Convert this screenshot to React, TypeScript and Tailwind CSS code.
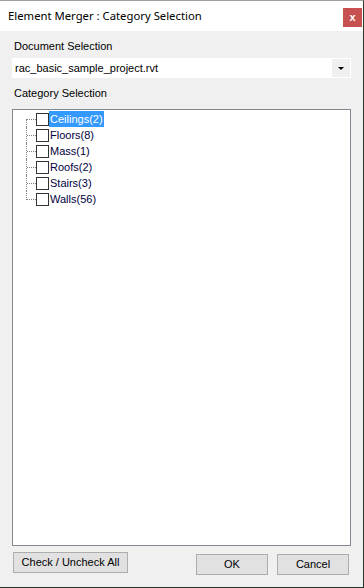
import React from "react";

const items = ["Ceilings(2)", "Floors(8)", "Mass(1)", "Roofs(2)", "Stairs(3)", "Walls(56)"];

export default function App() {
  return (
    <div
      className="w-[364px] h-[588px] flex flex-col bg-[#f0f0f0] border-t border-t-[#a0a0a0] border-r border-r-[#2c3628] border-b border-b-[#2c3628] overflow-hidden"
      style={{ fontFamily: '"Liberation Sans", Arial, sans-serif' }}
    >
      {/* Title bar */}
      <div className="h-[30px] bg-white flex items-start justify-between shrink-0">
        <div className="pl-[8px] pt-[7px] text-[11.3px] leading-[16px] text-black" style={{ fontFamily: '"Noto Sans", "Liberation Sans", sans-serif' }}>
          Element Merger : Category Selection
        </div>
        <div className="mt-[7px] mr-[1px] w-[19px] h-[19px] bg-[#c75050] flex items-center justify-center text-white text-[11px] font-bold leading-none pb-[1px]">
          x
        </div>
      </div>

      {/* Body */}
      <div className="flex-1 flex flex-col px-[12px] pt-[9px] pb-[12px] text-[11px] text-black">
        <div className="pl-[2px] h-[13px] leading-[13px]">Document Selection</div>
        <div className="mt-[5px] h-[20px] bg-white flex items-center">
          <div className="flex-1 pl-[3px] leading-[20px]">rac_basic_sample_project.rvt</div>
          <div className="w-[18px] h-[18px] mr-[1px] bg-[#efefef] flex items-center justify-center">
            <div className="w-0 h-0 border-l-[3px] border-r-[3px] border-t-[3px] border-l-transparent border-r-transparent border-t-black mt-[1px]" />
          </div>
        </div>
        <div className="mt-[9px] pl-[2px] h-[13px] leading-[13px]">Category Selection</div>
        <div className="mt-[9px] flex-1 border border-[#828790] bg-white pt-[1px]">
          {items.map((label, i) => (
            <div key={label} className="flex items-center h-[16px]">
              <div className="ml-[13px] w-[10px] h-full relative">
                <span
                  className={
                    "absolute left-0 border-l border-dotted border-[#808080] " +
                    (i === 0 ? "top-[8px] bottom-0" : i === items.length - 1 ? "top-0 h-[9px]" : "top-0 bottom-0")
                  }
                />
                <span className="absolute left-[1px] right-0 top-[8px] border-t border-dotted border-[#808080]" />
              </div>
              <div className="w-[13px] h-[13px] border border-[#333333] bg-white shrink-0" />
              <div
                className={
                  "h-[16px] leading-[16px] px-[1px] " +
                  (i === 0 ? "bg-[#3399ff] text-white" : "text-[#000040]")
                }
              >
                {label}
              </div>
            </div>
          ))}
        </div>
        <div className="mt-[6px] flex items-start justify-between pl-[1px] pr-[2px]">
          <button className="w-[115px] h-[21px] bg-[#e1e1e1] border border-[#adadad] text-[11px] leading-[19px] text-black">
            Check / Uncheck All
          </button>
          <div className="flex gap-[9px] mt-[2px]">
            <button className="w-[72px] h-[21px] bg-[#e1e1e1] border border-[#adadad] text-[11px] leading-[19px] text-black">
              OK
            </button>
            <button className="w-[72px] h-[21px] bg-[#e1e1e1] border border-[#adadad] text-[11px] leading-[19px] text-black">
              Cancel
            </button>
          </div>
        </div>
      </div>
    </div>
  );
}
